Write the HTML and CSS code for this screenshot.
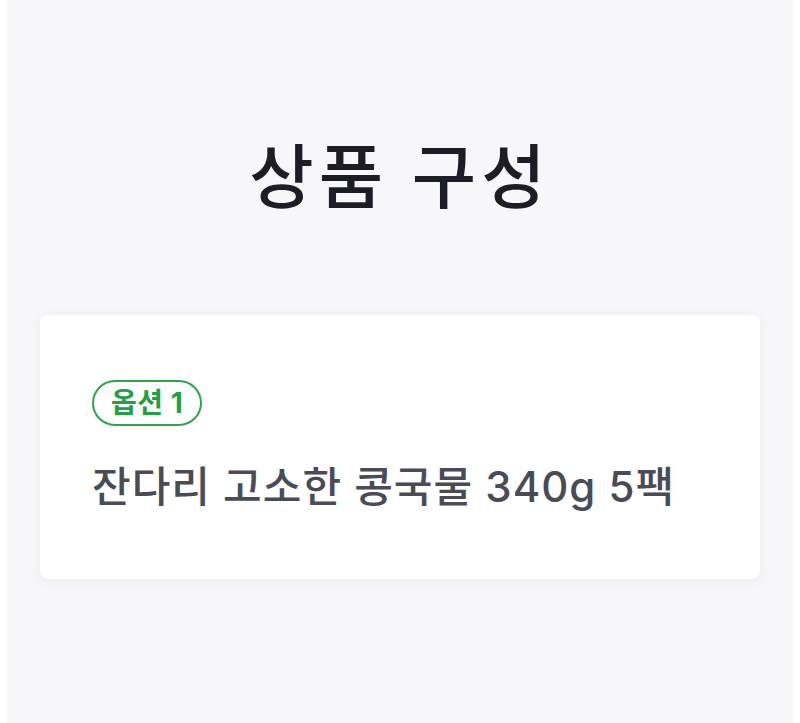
FILE: index.html
```html
<!DOCTYPE html>
<html lang="ko">
<head>
<meta charset="utf-8">
<link rel="stylesheet" href="styles.css">
</head>
<body>
<main class="page">
  <h1 class="title">상품 구성</h1>
  <section class="card">
    <span class="badge">옵션 1</span>
    <p class="product">잔다리 고소한 콩국물 340g 5팩</p>
  </section>
</main>
</body>
</html>
```
FILE: styles.css
```css
html, body {
  margin: 0;
  padding: 0;
  background: #ffffff;
}
body {
  font-family: Inter, "Noto Sans CJK KR", "Noto Sans", sans-serif;
}
.page {
  margin: 0 7px;
  min-height: 723px;
  background: #f7f7f9;
  padding: 131px 33px 40px;
  box-sizing: border-box;
}
.title {
  margin: 0;
  text-align: center;
  font-size: 70px;
  font-weight: 500;
  letter-spacing: 5px;
  line-height: 94px;
  color: #1c1d25;
}
.card {
  margin-top: 90px;
  background: #ffffff;
  border-radius: 8px;
  box-shadow: 0 2px 14px rgba(30, 30, 60, 0.05);
  padding: 65px 52px 64px;
  display: flex;
  flex-direction: column;
  align-items: flex-start;
  gap: 33px;
}
.badge {
  display: inline-flex;
  align-items: center;
  height: 46px;
  box-sizing: border-box;
  padding: 0 17px;
  border: 2px solid #2aa64a;
  border-radius: 999px;
  color: #22a044;
  font-size: 28px;
  font-weight: 700;
  letter-spacing: 0.5px;
  line-height: 1;
}
.product {
  margin: 0;
  font-size: 42px;
  font-weight: 500;
  letter-spacing: 1px;
  line-height: 56px;
  color: #4a4b56;
}
```
